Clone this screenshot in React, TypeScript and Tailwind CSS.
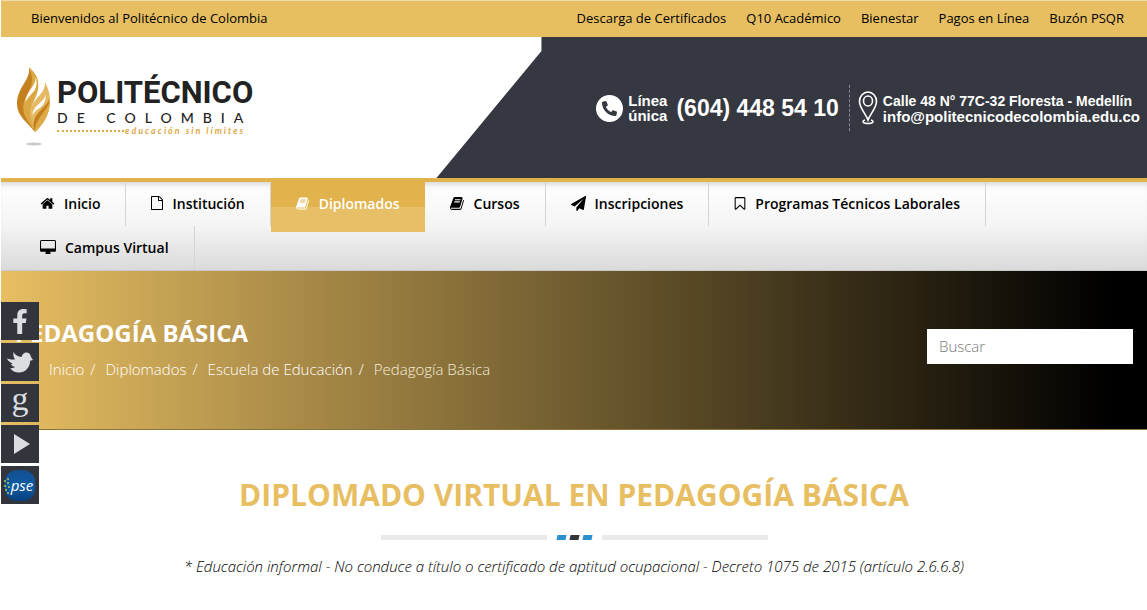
import { FaFacebookF, FaPhoneAlt } from "react-icons/fa";
import clsx from "clsx";

interface IconProps {
  path: string;
  viewBox?: string;
  className?: string;
}

const GlyphIcon: React.FC<IconProps> = ({
  path,
  viewBox = "0 0 1792 1792",
  className,
}) => (
  <svg viewBox={viewBox} className={className} fill="currentColor" aria-hidden="true">
    <path d={path} />
  </svg>
);

const HOME =
  "M1472 992v480q0 26-19 45t-45 19h-384v-384h-256v384h-384q-26 0-45-19t-19-45v-480q0-1 .5-3t.5-3l575-474 575 474q1 2 1 6zm223-69l-62 74q-8 9-21 11h-3q-13 0-21-7l-692-577-692 577q-12 8-24 7-13-2-21-11l-62-74q-8-10-7-23.5t11-21.5l719-599q32-26 76-26t76 26l244 204v-195q0-14 9-23t23-9h192q14 0 23 9t9 23v408l219 182q10 8 11 21.5t-7 23.5z";
const FILE =
  "M1596 380q28 28 48 76t20 88v1152q0 40-28 68t-68 28h-1344q-40 0-68-28t-28-68v-1600q0-40 28-68t68-28h896q40 0 88 20t76 48zm-444-244v376h376q-10-29-22-41l-313-313q-12-12-41-22zm384 1528v-1024h-416q-40 0-68-28t-28-68v-416h-768v1536h1280z";
const BOOK =
  "M1639 478q40 57 18 129l-275 906q-19 64-76.5 107.5t-122.5 43.5h-923q-77 0-148.5-53.5t-99.5-131.5q-24-67-2-127 0-4 3-27t4-37q1-8-3-21.5t-3-19.5q2-11 8-21t16.5-23.5 16.5-23.5q23-38 45-91.5t30-91.5q3-10 .5-30t-.5-28q3-11 17-28t17-23q21-36 42-92t25-90q1-9-2.5-32t.5-28q4-13 22-30.5t22-22.5q19-26 42.5-84.5t27.5-96.5q1-8-3-25.5t-2-26.5q2-8 9-18t18-23 17-21q8-12 16.5-30.5t15-35 16-36 19.5-32 26.5-23.5 36-11.5 47.5 5.5l-1 3q38-9 51-9h761q74 0 114 56t18 130l-274 906q-36 119-71.5 153.5t-128.5 34.5h-869q-27 0-38 15-11 16-1 43 24 70 144 70h923q29 0 56-15.5t35-41.5l300-987q7-22 5-57 38 15 59 43zm-1064 2q-4 13 2 22.5t20 9.5h608q13 0 25.5-9.5t16.5-22.5l21-64q4-13-2-22.5t-20-9.5h-608q-13 0-25.5 9.5t-16.5 22.5zm-83 256q-4 13 2 22.5t20 9.5h608q13 0 25.5-9.5t16.5-22.5l21-64q4-13-2-22.5t-20-9.5h-608q-13 0-25.5 9.5t-16.5 22.5z";
const PLANE =
  "M1764 11q33 24 27 64l-256 1536q-5 29-32 45-14 8-31 8-11 0-24-5l-453-185-242 295q-18 23-49 23-13 0-22-4-19-7-30.5-23.5t-11.5-36.5v-349l864-1059-1069 925-395-162q-37-14-40-55-2-40 32-59l1664-960q15-9 32-9 20 0 36 11z";
const BOOKMARK =
  "M1408 256h-1024v1242l423-406 89-85 89 85 423 406v-1242zm12-128q23 0 44 9 33 13 52.5 41t19.5 62v1289q0 34-19.5 62t-52.5 41q-19 8-44 8-48 0-83-32l-441-424-441 424q-36 33-83 33-23 0-44-9-33-13-52.5-41t-19.5-62v-1289q0-34 19.5-62t52.5-41q21-9 44-9h1048z";
const DESKTOP =
  "M1728 992v-832q0-13-9.5-22.5t-22.5-9.5h-1600q-13 0-22.5 9.5t-9.5 22.5v832q0 13 9.5 22.5t22.5 9.5h1600q13 0 22.5-9.5t9.5-22.5zm128-832v1088q0 66-47 113t-113 47h-544q0 37 16 77.5t32 71 16 43.5q0 26-19 45t-45 19h-512q-26 0-45-19t-19-45q0-14 16-44t32-70 16-78h-544q-66 0-113-47t-47-113v-1088q0-66 47-113t113-47h1600q66 0 113 47t47 113z";
const BIRD =
  "M6.500 1c1.500 3 4.500 4.500 8 5C15 3 17.500 1.200 20 1.500c2 .2 3.500 1.800 4 4.500l2 3-2.800.8C23 17 18 21.500 12 21.500c-3.500 0-7-1.500-9-4.500 2 .5 4 0 5-1-2-.3-3.500-1.500-4-3l2-.3C3 11.500 1 10 0 7.500c2.500 1 5 1 8 1C6.500 6.500 6 3.500 6.500 1Z";

const topLinks = [
  "Descarga de Certificados",
  "Q10 Académico",
  "Bienestar",
  "Pagos en Línea",
  "Buzón PSQR",
];

const navItems = [
  { label: "Inicio", path: HOME, box: "0 0 1792 1792", size: "w-[15px] h-[15px]" },
  { label: "Institución", path: FILE, box: "128 0 1536 1792", size: "w-[12px] h-[14px]" },
  { label: "Diplomados", path: BOOK, box: "0 0 1792 1792", size: "w-[14px] h-[15px]", active: true },
  { label: "Cursos", path: BOOK, box: "0 0 1792 1792", size: "w-[15px] h-[15px]" },
  { label: "Inscripciones", path: PLANE, box: "0 0 1792 1792", size: "w-[15px] h-[15px]" },
  { label: "Programas Técnicos Laborales", path: BOOKMARK, box: "256 0 1280 1792", size: "w-[12px] h-[15px]" },
  { label: "Campus Virtual", path: DESKTOP, box: "-64 0 1920 1792", size: "w-[16px] h-[15px]" },
];

const crumbs = ["Inicio", "Diplomados", "Escuela de Educación"];

const Logo = () => (
  <a href="#" className="flex items-start pl-[14px] pt-[29px]">
    <svg viewBox="0 0 36 84" className="w-9 h-[84px]" aria-hidden="true">
      {/* left tongue, dark side then light side */}
      <path d="M14 1C16 14 2 21 2 38c0 12 11 19 18 28-2-8-9-14-8-22C13 33 24 20 14 1Z" fill="#c4801f" />
      <path d="M14 1c5 12 3 19-1 26C9 34 7 40 9 47c1 5 6 11 9 16 1-8-4-13-2-20C18 33 25 28 23 15 22 9 18 5 14 1Z" fill="#dba743" />
      <path d="M20.500 11c1 9-9 13-10 25 4-8 9-9 10.500-15 1-4 .5-7-.5-10Z" fill="#fff" />
      {/* right tongue */}
      <path d="M30 16c1 10-8 14-13 23-4 8-1 15 3 27 7-6 15-17 15-31 0-8-2-13-5-19Z" fill="#e4b961" />
      <path d="M30.500 28c0 8-12 10-13 21 4-7 10-7 12-13 1-3 1.500-5 1-8Z" fill="#fff" />
      <path d="M34.500 31c-1 11-17 14-16 30l1.500 5c6-6 15-17 14.500-35Z" fill="#c4801f" />
      <path d="M35 35c-3 10-13 16-15 28v3c7-6 15-17 15-31Z" fill="#ddab48" />
      <ellipse cx="19" cy="78" rx="8" ry="1.5" fill="#c9c9c9" />
    </svg>
    <span className="flex flex-col pl-[6px] pt-[10px]">
      <span className="font-['Roboto',sans-serif] text-[31px] leading-[34px] font-bold text-[#222]">
        POLITÉCNICO
      </span>
      <span className="font-['Lato',sans-serif] text-[14px] leading-4 font-medium tracking-[9px] text-[#222]">
        DE COLOMBIA
      </span>
      <span className="flex items-center gap-px font-['Lato',sans-serif] text-[9px] leading-[10px] font-bold italic tracking-[2px] text-[#dda848]">
        <span className="w-[67px] border-t-2 border-dotted border-[#dda848]" />
        educación sin límites
      </span>
    </span>
  </a>
);

const Contact = () => (
  <div className="flex flex-1 items-center justify-end bg-[#353840] pr-[7px] pt-px font-['Liberation_Sans',sans-serif] font-bold text-white [clip-path:polygon(105px_0,100%_0,100%_100%,0_100%,105px_14px)]">
    <span className="flex h-[27px] w-[27px] items-center justify-center rounded-full bg-white text-[#353840]">
      <FaPhoneAlt className="h-[15px] w-[15px]" />
    </span>
    <span className="pl-[5px] text-[15px] leading-[15px]">
      Línea
      <br />
      única
    </span>
    <span className="pl-[9px] text-[23px] leading-[27px]">(604) 448 54 10</span>
    <span className="ml-[10px] h-[46px] border-l border-dashed border-[#85878c]" />
    <svg viewBox="0 0 20 34" className="ml-2 h-[34px] w-5" fill="none" stroke="#fff" strokeWidth="1.6" aria-hidden="true">
      <path d="M10 29C8 23 1.500 17 1.500 10.500a8.500 9.500 0 0 1 17 0C18.500 17 12 23 10 29Z" />
      <ellipse cx="10" cy="10" rx="4.500" ry="5" />
      <path d="M7 29c-3 1-3 3.500 3 3.500s6-2.500 3-3.500" />
    </svg>
    <address className="pl-[5px] text-[15px] leading-[15px] not-italic">
      <span className="text-[14px]">Calle 48 N° 77C-32 Floresta - Medellín</span>
      <br />
      info@politecnicodecolombia.edu.co
    </address>
  </div>
);

const socialBox =
  "flex h-[38px] w-[38px] items-center justify-center bg-[#33353d] text-[#dcdde0]";

const SocialBar = () => (
  <div className="absolute left-px top-[302px] flex flex-col gap-[3px]">
    <a href="#" aria-label="Facebook" className={socialBox}>
      <FaFacebookF className="h-[25px] w-[18px]" />
    </a>
    <a href="#" aria-label="Twitter" className={socialBox}>
      <GlyphIcon path={BIRD} viewBox="0 0 26 22" className="h-[22px] w-[26px]" />
    </a>
    <a href="#" aria-label="Google" className={socialBox}>
      <span className="pb-2 font-['Liberation_Serif',serif] text-[34px] leading-[30px]">g</span>
    </a>
    <a href="#" aria-label="YouTube" className={socialBox}>
      <svg viewBox="0 0 16 20" className="ml-[3px] h-5 w-4" fill="currentColor" aria-hidden="true">
        <path d="M0 0 16 10 0 20Z" />
      </svg>
    </a>
    <a href="#" aria-label="PSE" className={socialBox}>
      <span className="relative flex h-[31px] w-[30px] items-center justify-center rounded-[12px] bg-linear-to-b from-[#134e8f] via-[#0d5ca5] to-[#0a3f7c] font-['Open_Sans',sans-serif] text-[15px] italic text-white">
        <svg viewBox="0 0 8 18" className="absolute -left-px top-2 h-[18px] w-2" fill="#b5c94c" aria-hidden="true">
          <circle cx="1" cy="3" r="1" />
          <circle cx="4" cy="1" r="1" />
          <circle cx="4" cy="5" r="1" />
          <circle cx="1" cy="8" r="1" />
          <circle cx="5" cy="9" r="1" />
          <circle cx="2" cy="12" r="1" />
          <circle cx="4" cy="15" r="1" />
        </svg>
        <span className="pl-1">pse</span>
      </span>
    </a>
  </div>
);

export default function App() {
  return (
    <div className="relative bg-white pl-px font-['Open_Sans',sans-serif] text-black">
      <div className="flex items-center justify-between border-t border-[#f0dcae] bg-[#e7be62] pl-[30px] pr-[23px] pb-[2px] text-[13px] leading-[34px]">
        <span>Bienvenidos al Politécnico de Colombia</span>
        <div className="flex gap-5">
          {topLinks.map((link) => (
            <a key={link} href="#">
              {link}
            </a>
          ))}
        </div>
      </div>

      <header className="flex h-[141px]">
        <div className="w-[38%]">
          <Logo />
        </div>
        <Contact />
      </header>

      <nav className="flex flex-wrap border-t-4 border-b border-t-[#e2b34d] border-b-[#c8c8c8] bg-linear-to-b from-white via-[#f4f4f4] to-[#dadada] text-[14px] font-semibold shadow-[inset_0_6px_6px_-4px_#d0d0d0]">
        {navItems.map((item) => (
          <a
            key={item.label}
            href="#"
            className={clsx(
              "flex h-11 items-center gap-[9px] px-[25px] pb-[2px]",
              item.active
                ? "-mb-[6px] h-[50px] bg-linear-to-b from-[#e2b34d] from-50% to-[#e6bf66] to-50% pb-[8px] text-white"
                : "border-r border-[#d2d5d5]",
              item.label === "Inicio" || item.label === "Campus Virtual" ? "pl-[39px]" : ""
            )}
          >
            <GlyphIcon path={item.path} viewBox={item.box} className={item.size} />
            {item.label}
          </a>
        ))}
      </nav>

      <section className="flex h-[159px] items-center justify-between border-b border-[#8a733d] bg-linear-to-r/srgb from-[#e7be62] to-black to-97% px-[14px] pb-[8px] text-white">
        <div className="pt-[6px]">
          <h1 className="text-[24px] leading-8 font-bold">PEDAGOGÍA BÁSICA</h1>
          <ol className="flex pt-[8px] pl-[34px] text-[15px] leading-6 font-light">
            {crumbs.map((crumb) => (
              <li key={crumb}>
                <a href="#">{crumb}</a>
                <span className="pl-[6px] pr-[10px]">/</span>
              </li>
            ))}
            <li className="text-[#f6eedd]">Pedagogía Básica</li>
          </ol>
        </div>
        <input
          type="search"
          aria-label="Buscar"
          placeholder="Buscar"
          className="h-[35px] w-[206px] bg-white px-3 text-[15px] font-light text-black placeholder:text-[#777]"
        />
      </section>

      <main className="flex flex-col items-center pt-[45px] text-center">
        <h2 className="text-[30px] leading-10 font-bold text-[#e7be62]">
          DIPLOMADO VIRTUAL EN PEDAGOGÍA BÁSICA
        </h2>
        <div className="flex items-center pt-5">
          <span className="h-[5px] w-[166px] bg-[#e9e9e9]" />
          <span className="flex gap-1 px-[10px]">
            <span className="h-[5px] w-[9px] -skew-x-12 bg-[#2c8fce]" />
            <span className="h-[5px] w-[9px] -skew-x-12 bg-[#33353d]" />
            <span className="h-[5px] w-[9px] -skew-x-12 bg-[#2c8fce]" />
          </span>
          <span className="h-[5px] w-[166px] bg-[#e9e9e9]" />
        </div>
        <p className="pt-[14px] text-[15px] leading-6 font-light italic">
          * Educación informal - No conduce a título o certificado de aptitud ocupacional - Decreto
          1075 de 2015 (artículo 2.6.6.8)
        </p>
      </main>

      <SocialBar />
    </div>
  );
}
